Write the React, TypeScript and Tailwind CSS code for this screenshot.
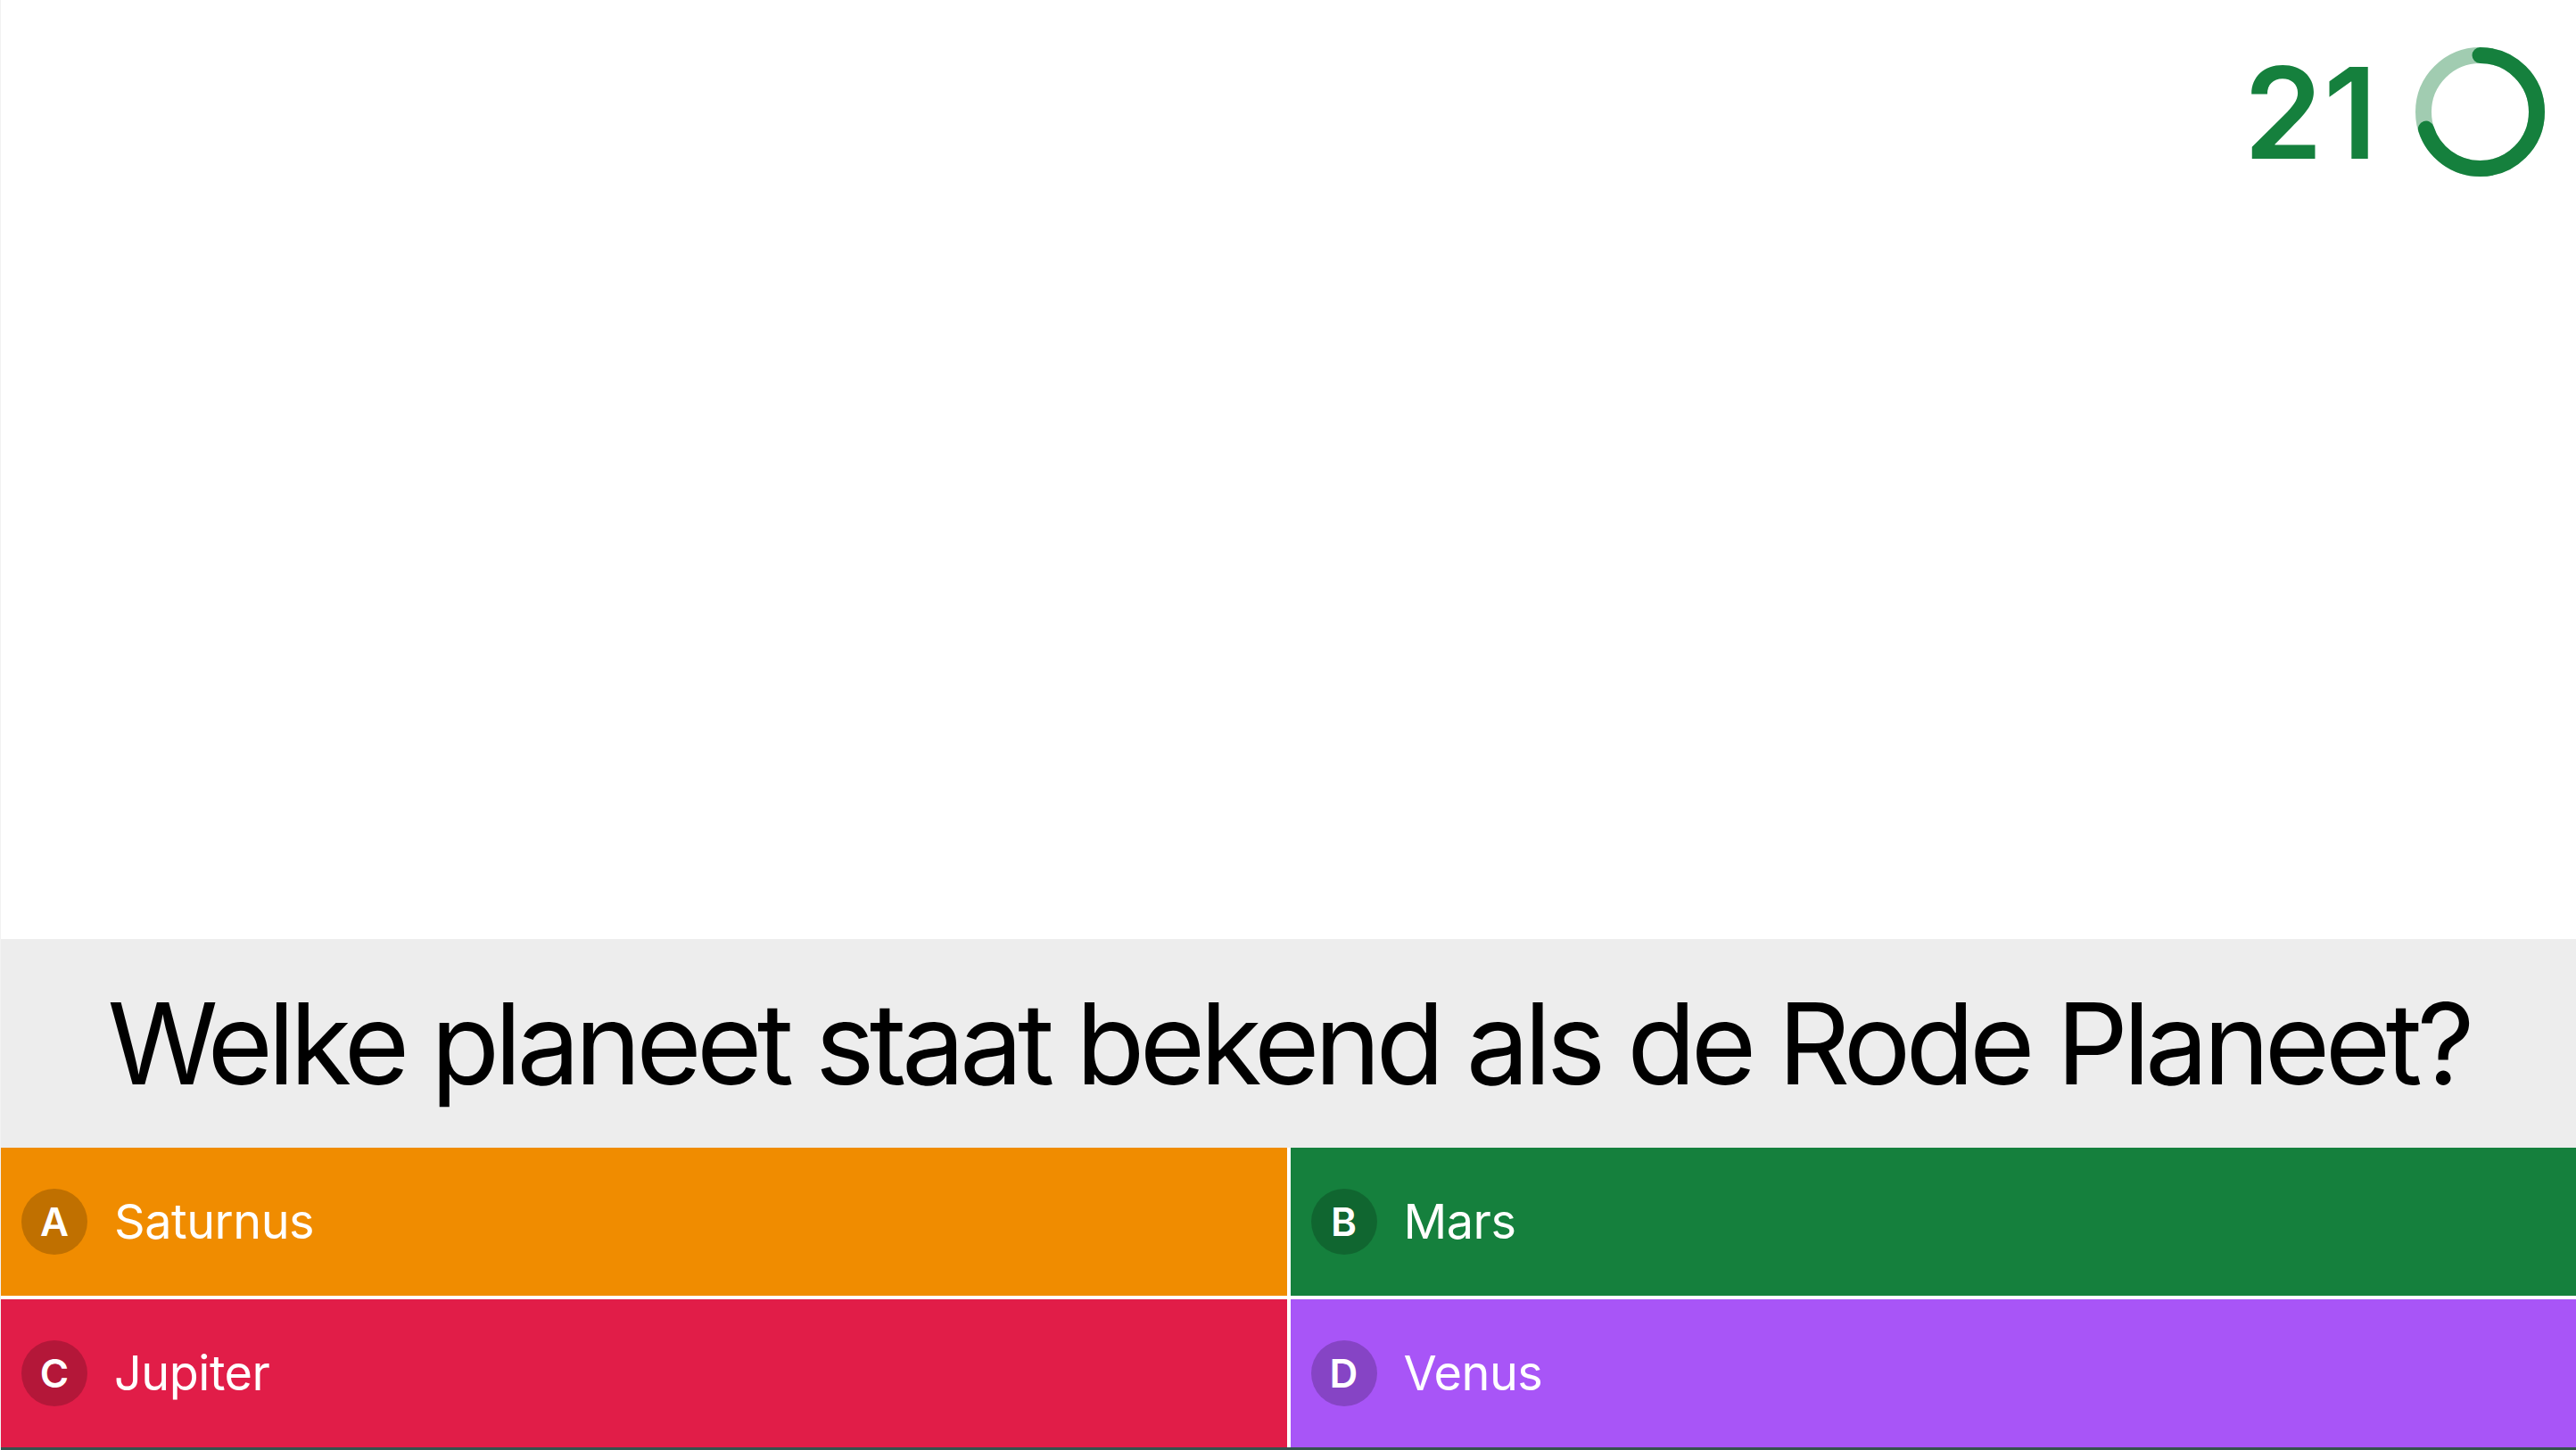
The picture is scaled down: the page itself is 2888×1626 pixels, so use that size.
const answers = [
  { key: 'A', label: 'Saturnus', bg: 'bg-[#f08c00]' },
  { key: 'B', label: 'Mars', bg: 'bg-[#15803d]' },
  { key: 'C', label: 'Jupiter', bg: 'bg-[#e11d48]' },
  { key: 'D', label: 'Venus', bg: 'bg-[#a855f7]' },
]

const SECONDS_LEFT = 21
const SECONDS_TOTAL = 30

function TimerRing() {
  const r = 63.5
  const c = 2 * Math.PI * r
  const done = (SECONDS_LEFT / SECONDS_TOTAL) * c
  return (
    <svg width="145" height="145" viewBox="0 0 145 145" className="-rotate-90">
      <circle cx="72.5" cy="72.5" r={r} fill="none" stroke="#15803d" strokeOpacity="0.4" strokeWidth="18" />
      <circle
        cx="72.5"
        cy="72.5"
        r={r}
        fill="none"
        stroke="#15803d"
        strokeWidth="18"
        strokeLinecap="round"
        strokeDasharray={`${done} ${c}`}
      />
    </svg>
  )
}

export default function App() {
  return (
    <div className="flex h-[1626px] w-[2888px] flex-col overflow-hidden border-l border-[#f2f2f2] bg-white font-['Inter','Noto_Sans',sans-serif]">
      {/* Timer */}
      <div className="flex flex-1 items-start justify-end pr-[35px] pt-[53px]">
        <div className="flex items-center gap-[42px]">
          <span className="text-[142px] font-semibold leading-none tracking-[1px] text-[#15803d]">
            {SECONDS_LEFT}
          </span>
          <TimerRing />
        </div>
      </div>

      {/* Question */}
      <div className="flex h-[234px] items-center justify-center bg-[#ededed]">
        <h1 className="text-[126px] font-normal leading-none tracking-[-5.7px] text-black">
          Welke planeet staat bekend als de Rode Planeet?
        </h1>
      </div>

      {/* Answers */}
      <div className="grid h-[336px] grid-cols-2 grid-rows-2 gap-1 bg-white">
        {answers.map((a) => (
          <div key={a.key} className={`flex items-center gap-[30px] pl-[23px] ${a.bg}`}>
            <div className="flex h-[74px] w-[74px] items-center justify-center rounded-full bg-black/20 text-[44px] font-semibold leading-none text-white">
              {a.key}
            </div>
            <span className="text-[54px] leading-none tracking-[-0.5px] text-white">{a.label}</span>
          </div>
        ))}
      </div>
      <div className="h-[3px] bg-[#35524e]" />
    </div>
  )
}
